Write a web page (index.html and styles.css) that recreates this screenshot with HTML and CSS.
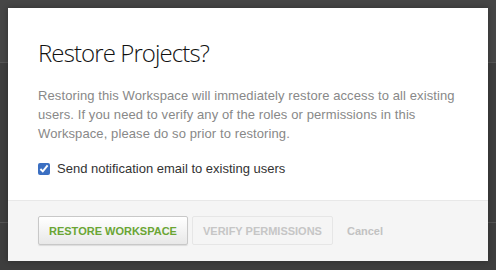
FILE: index.html
```html
<!DOCTYPE html>
<html lang="en">
<head>
    <meta charset="UTF-8">
    <title>Restore Projects?</title>
    <link rel="stylesheet" href="styles.css">
</head>
<body>
    <!-- Restore dialog -->
    <div class="modal">
        <div class="modal-body">
            <h1>Restore Projects?</h1>
            <p>Restoring this Workspace will immediately restore access to all existing users. If you need to verify any of the roles or permissions in this Workspace, please do so prior to restoring.</p>
            <label class="notify">
                <input type="checkbox" checked>
                <span>Send notification email to existing users</span>
            </label>
        </div>
        <div class="modal-footer">
            <button class="btn btn-primary">Restore Workspace</button>
            <button class="btn btn-disabled">Verify Permissions</button>
            <a href="#" class="cancel">Cancel</a>
        </div>
    </div>
</body>
</html>
```

FILE: styles.css
```css
* {
    box-sizing: border-box;
}

body {
    margin: 0;
    padding: 8px;
    height: 270px;
    overflow: hidden;
    font-family: 'Liberation Sans', Arial, sans-serif;
    background:
        linear-gradient(#555555, #555555) 0 62px / 100% 1px no-repeat,
        linear-gradient(#545454, #545454) 0 222px / 100% 1px no-repeat,
        linear-gradient(#464646, #464646) 0 0 / 100% 62px no-repeat,
        #3e3e3e;
}

/* Dialog */
.modal {
    width: 480px;
    height: 253px;
    background: #fff;
    display: flex;
    flex-direction: column;
    box-shadow: 0 0 6px rgba(0, 0, 0, 0.3);
}

.modal-body {
    flex: 1;
    padding: 29px 30px 0;
}

h1 {
    margin: 0 0 17px;
    font-family: 'Open Sans', sans-serif;
    font-weight: 300;
    font-size: 24px;
    line-height: 32px;
    letter-spacing: -0.9px;
    color: #111;
}

p {
    margin: 0 0 18px;
    font-size: 13px;
    line-height: 19px;
    letter-spacing: 0.1px;
    color: #888;
}

.notify {
    display: flex;
    align-items: center;
    font-size: 13px;
    color: #333;
}

.notify input {
    margin: 0 7px 0 0;
    width: 12px;
    height: 12px;
    accent-color: #3b6fc2;
}

/* Footer */
.modal-footer {
    height: 61px;
    background: #f5f5f5;
    border-top: 1px solid #e8e8e8;
    display: flex;
    align-items: center;
    gap: 4px;
    padding: 0 30px 1px;
}

.btn {
    height: 29px;
    padding: 0 10px;
    font-family: 'Liberation Sans', Arial, sans-serif;
    font-size: 11px;
    font-weight: bold;
    text-transform: uppercase;
    border-radius: 2px;
}

.btn-primary {
    color: #6aa534;
    background: linear-gradient(#ffffff, #e8e8e8);
    border: 1px solid #c8c8c8;
    box-shadow: 0 1px 1px rgba(0, 0, 0, 0.1);
}

.btn-disabled {
    color: #c6c6c6;
    background: #f5f5f5;
    border: 1px solid #e6e6e6;
}

.cancel {
    margin-left: 10px;
    font-size: 11px;
    font-weight: bold;
    color: #c2c2c2;
    text-decoration: none;
}
```
